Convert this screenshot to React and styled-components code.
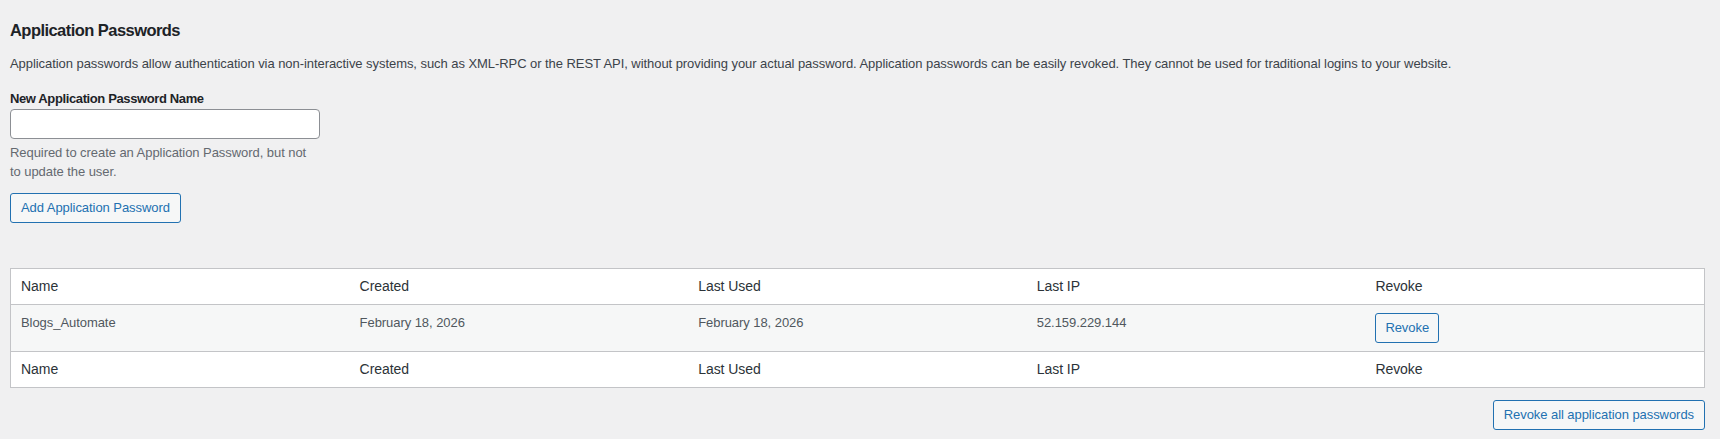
import React, { useState } from 'react';
import styled, { createGlobalStyle } from 'styled-components';

const GlobalStyle = createGlobalStyle`
    html, body {
        margin: 0;
        padding: 0;
        background: #f0f0f1;
    }
    body {
        font-family: "Liberation Sans", Arial, sans-serif;
        font-size: 13px;
        letter-spacing: -0.06px;
        color: #3c434a;
    }
    * {
        box-sizing: border-box;
    }
`

const Page = styled.div`
    min-height: 439px;
    padding: 19px 15px 10px 10px;
`

const Title = styled.h2`
    margin: 0;
    font-size: 16.5px;
    line-height: 22px;
    letter-spacing: -0.55px;
    font-weight: 600;
    color: #1d2327;
`

const Intro = styled.p`
    margin: 13px 0 0;
    font-size: 13px;
    line-height: 19.5px;
`

const Field = styled.div`
    width: 310px;
    margin-top: 15px;
`

const Label = styled.label`
    display: block;
    font-weight: 600;
    letter-spacing: -0.38px;
    color: #1d2327;
    line-height: 19px;
    margin-bottom: 1px;
`

const TextInput = styled.input`
    display: block;
    width: 100%;
    height: 30px;
    padding: 0 8px;
    border: 1px solid #8c8f94;
    border-radius: 4px;
    background: #fff;
    font: inherit;
    color: #2c3338;
    outline: none;
`

const Description = styled.p`
    margin: 4px 0 0;
    color: #646970;
    line-height: 19.5px;
`

const Button = styled.button`
    display: inline-block;
    height: 30px;
    padding: 0 ${props => props.$small ? '9px' : '10px'};
    border: 1px solid #2271b1;
    border-radius: 3px;
    background: #f6f7f7;
    color: #2271b1;
    font-family: inherit;
    font-size: 13px;
    letter-spacing: -0.06px;
    line-height: 28px;
    cursor: pointer;
    white-space: nowrap;
`

const AddRow = styled.div`
    margin-top: 11px;
`

const Table = styled.table`
    width: 100%;
    margin-top: 45px;
    border: 1px solid #c3c4c7;
    border-spacing: 0;
    background: #fff;
    table-layout: fixed;
`

const HeadCell = styled.th`
    padding: 8px 10px;
    text-align: left;
    font-weight: 400;
    font-size: 14px;
    line-height: 19px;
    color: #2c3338;
    border-bottom: ${props => props.$foot ? '0' : '1px solid #c3c4c7'};
    border-top: ${props => props.$foot ? '1px solid #c3c4c7' : '0'};
`

const Row = styled.tr`
    background: ${props => props.$alt ? '#f6f7f7' : '#fff'};
`

const Cell = styled.td`
    padding: 8px 10px;
    vertical-align: top;
    font-size: 13px;
    line-height: 19.5px;
    color: #50575e;
`

const Actions = styled.div`
    display: flex;
    justify-content: flex-end;
    margin-top: 12px;
`

const columns = ['Name', 'Created', 'Last Used', 'Last IP', 'Revoke'];

const passwords = [
    { name: 'Blogs_Automate', created: 'February 18, 2026', lastUsed: 'February 18, 2026', lastIp: '52.159.229.144' },
];

export default function App() {
    const [newName, setNewName] = useState('');

    return (
        <Page>
            <GlobalStyle />
            <Title>Application Passwords</Title>
            <Intro>
                Application passwords allow authentication via non-interactive systems, such as XML-RPC or the REST API, without providing your actual password. Application passwords can be easily revoked. They cannot be used for traditional logins to your website.
            </Intro>
            <Field>
                <Label htmlFor="new_application_password_name">New Application Password Name</Label>
                <TextInput
                    id="new_application_password_name"
                    type="text"
                    value={newName}
                    onChange={(e) => setNewName(e.target.value)}
                />
                <Description>Required to create an Application Password, but not to update the user.</Description>
            </Field>
            <AddRow>
                <Button>Add Application Password</Button>
            </AddRow>

            <Table>
                <thead>
                    <tr>
                        {columns.map(col => <HeadCell key={col}>{col}</HeadCell>)}
                    </tr>
                </thead>
                <tbody>
                    {passwords.map((item, i) => (
                        <Row key={item.name} $alt={i % 2 === 0}>
                            <Cell>{item.name}</Cell>
                            <Cell>{item.created}</Cell>
                            <Cell>{item.lastUsed}</Cell>
                            <Cell>{item.lastIp}</Cell>
                            <Cell><Button $small>Revoke</Button></Cell>
                        </Row>
                    ))}
                </tbody>
                <tfoot>
                    <tr>
                        {columns.map(col => <HeadCell key={col} $foot>{col}</HeadCell>)}
                    </tr>
                </tfoot>
            </Table>

            <Actions>
                <Button>Revoke all application passwords</Button>
            </Actions>
        </Page>
    )
}
